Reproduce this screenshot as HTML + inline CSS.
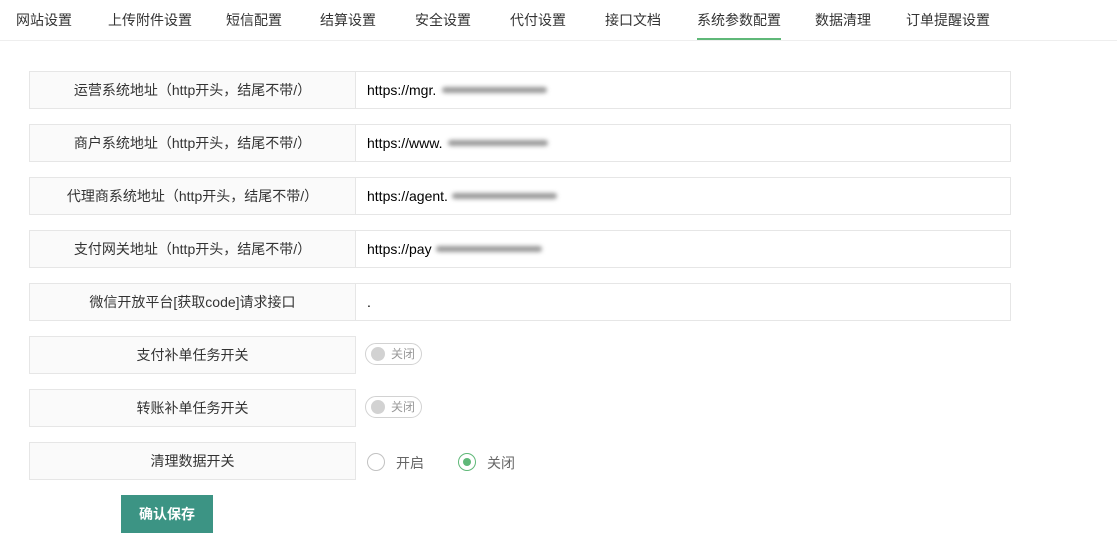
<!DOCTYPE html><html><head><meta charset="utf-8"><style>
*{margin:0;padding:0;box-sizing:border-box}
body{width:1117px;height:555px;background:#fff;font-family:"Liberation Sans","Noto Sans CJK SC",sans-serif;font-size:14px;color:#333;position:relative;overflow:hidden}
.tabs{position:absolute;left:0;top:0;width:1117px;height:41px;border-bottom:1px solid #eee}
.tab{position:absolute;top:10px;color:#333;white-space:nowrap}
.act{position:absolute;left:697px;top:38px;width:84px;height:2px;background:#5fb878}
.row{position:absolute;left:29px;width:982px;height:38px;border:1px solid #e6e6e6}
.lab{position:absolute;left:0;top:0;width:326px;height:36px;background:#fafafa;border-right:1px solid #e6e6e6;text-align:center;line-height:36px;color:#333}
.val{position:absolute;left:337px;top:0;line-height:36px;color:#000}
.blur{position:absolute;height:6px;background:#999;border-radius:3px;filter:blur(2px);top:15px}
.sw{position:absolute;left:365px;width:57px;height:22px;border:1px solid #d2d2d2;border-radius:20px;font-size:12px;color:#999}
.sw i{position:absolute;left:5px;top:3px;width:14px;height:14px;border-radius:50%;background:#d2d2d2}
.sw span{position:absolute;left:25px;top:3px;line-height:14px}
.rad{position:absolute;width:18px;height:18px;border-radius:50%;border:1px solid #c2c2c2}
.btn{position:absolute;left:121px;top:495px;width:92px;height:38px;background:#3c9484;color:#fff;text-align:center;line-height:38px;font-weight:bold}
</style></head><body>
<div class="tabs">
<span class="tab" style="left:16px">网站设置</span>
<span class="tab" style="left:108px">上传附件设置</span>
<span class="tab" style="left:226px">短信配置</span>
<span class="tab" style="left:320px">结算设置</span>
<span class="tab" style="left:415px">安全设置</span>
<span class="tab" style="left:510px">代付设置</span>
<span class="tab" style="left:605px">接口文档</span>
<span class="tab" style="left:697px">系统参数配置</span>
<span class="tab" style="left:815px">数据清理</span>
<span class="tab" style="left:906px">订单提醒设置</span>
<div class="act"></div></div>

<div class="row" style="top:71px"><div class="lab">运营系统地址（http开头，结尾不带/）</div><div class="val">https://mgr.</div><div class="blur" style="left:412px;width:105px"></div></div>
<div class="row" style="top:124px"><div class="lab">商户系统地址（http开头，结尾不带/）</div><div class="val">https://www.</div><div class="blur" style="left:418px;width:100px"></div></div>
<div class="row" style="top:177px"><div class="lab">代理商系统地址（http开头，结尾不带/）</div><div class="val">https://agent.</div><div class="blur" style="left:422px;width:105px"></div></div>
<div class="row" style="top:230px"><div class="lab">支付网关地址（http开头，结尾不带/）</div><div class="val">https://pay</div><div class="blur" style="left:406px;width:106px"></div></div>
<div class="row" style="top:283px"><div class="lab">微信开放平台[获取code]请求接口</div><div class="val">.</div></div>
<div class="row" style="top:336px;border-right:none;width:327px"><div class="lab">支付补单任务开关</div></div>
<div class="sw" style="top:343px"><i></i><span>关闭</span></div>
<div class="row" style="top:389px;border-right:none;width:327px"><div class="lab">转账补单任务开关</div></div>
<div class="sw" style="top:396px"><i></i><span>关闭</span></div>
<div class="row" style="top:442px;border-right:none;width:327px"><div class="lab">清理数据开关</div></div>
<div class="rad" style="left:367px;top:453px"></div><span style="position:absolute;left:396px;top:453px;color:#666">开启</span>
<div class="rad" style="left:458px;top:453px;border-color:#5fb878"><i style="position:absolute;left:4px;top:4px;width:8px;height:8px;border-radius:50%;background:#5fb878"></i></div><span style="position:absolute;left:487px;top:453px;color:#666">关闭</span>
<div class="btn">确认保存</div>
</body></html>
